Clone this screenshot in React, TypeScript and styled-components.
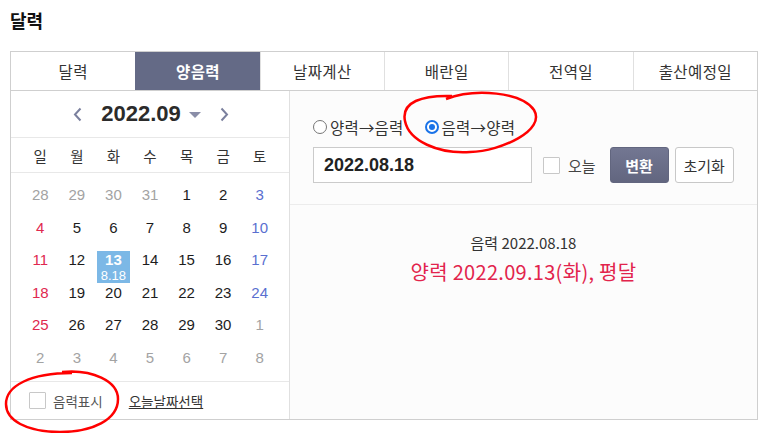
import * as React from 'react'
import styled, { createGlobalStyle } from 'styled-components'

const GlobalStyle = createGlobalStyle`
  body {
    margin: 0;
    background: #fff;
    font-family: 'Liberation Sans', 'Noto Sans CJK KR', sans-serif;
    color: #333;
  }
`

const Page = styled.div`
  position: relative;
  padding: 8px 15px 0 10px;
  width: 748px;
  height: 425px;
`
const Title = styled.h1`
  margin: 0 0 19px 0;
  font-size: 18px;
  line-height: 24px;
  font-weight: 700;
  color: #111;
  font-family: 'Noto Sans CJK KR', sans-serif;
`
const Box = styled.div`
  border: 1px solid #cfcfcf;
`
const Tabs = styled.div`
  display: grid;
  grid-template-columns: repeat(6, 1fr);
  border-bottom: 1px solid #cfcfcf;
`
const Tab = styled.div<{ $active?: boolean }>`
  height: 38px;
  display: flex;
  align-items: center;
  justify-content: center;
  font-family: 'Noto Sans CJK KR', sans-serif;
  font-size: 15.5px;
  letter-spacing: 0.4px;
  font-weight: ${p => (p.$active ? 700 : 400)};
  color: ${p => (p.$active ? '#fff' : '#333')};
  background: ${p => (p.$active ? '#646a86' : '#fff')};
  border-left: 1px solid ${p => (p.$active ? '#646a86' : '#e0e0e0')};
  &:first-child {
    border-left: none;
  }
`
const Body = styled.div`
  display: flex;
`
const CalendarPanel = styled.div`
  width: 278px;
  border-right: 1px solid #e0e0e0;
`
const MonthNav = styled.div`
  height: 46px;
  display: flex;
  align-items: center;
  justify-content: center;
  gap: 15px;
  padding-left: 2px;
  border-bottom: 1px solid #e8e8e8;
`
const NavArrow = styled.svg`
  width: 9px;
  height: 15px;
  margin: 0 4px;
`
const MonthLabel = styled.div`
  display: flex;
  align-items: center;
  gap: 8px;
  font-size: 22px;
  font-weight: 700;
  color: #2b2b2b;
`
const Caret = styled.span`
  width: 0;
  height: 0;
  border-left: 6px solid transparent;
  border-right: 6px solid transparent;
  border-top: 6px solid #8a8ea8;
  margin-top: 2px;
`
const WeekRow = styled.div`
  display: grid;
  grid-template-columns: repeat(7, 1fr);
  padding: 0 11px;
  height: 34px;
  align-items: center;
  border-bottom: 1px solid #e8e8e8;
  font-family: 'Noto Sans CJK KR', sans-serif;
  font-size: 14.5px;
  color: #333;
  text-align: center;
`
const DayGrid = styled.div`
  display: grid;
  grid-template-columns: repeat(7, 1fr);
  grid-auto-rows: 32.5px;
  padding: 6px 11px 7px;
  border-bottom: 1px solid #e8e8e8;
`
const dayColors = {
  out: '#a3a3a3',
  sun: '#e0284f',
  sat: '#5a6fd0',
  norm: '#1d1d1d'
}
type DayKind = keyof typeof dayColors
const DayCell = styled.div`
  display: flex;
  justify-content: center;
`
const DayBox = styled.div<{ $kind: DayKind; $selected?: boolean }>`
  width: 33px;
  height: 32px;
  margin-top: 7px;
  display: flex;
  flex-direction: column;
  align-items: center;
  font-size: 15px;
  line-height: 18px;
  color: ${p => (p.$selected ? '#fff' : dayColors[p.$kind])};
  font-weight: ${p => (p.$selected ? 700 : 400)};
  background: ${p => (p.$selected ? '#7cb8e6' : 'transparent')};
  position: relative;
  z-index: 1;
`
const Lunar = styled.span`
  font-size: 13px;
  line-height: 14px;
  font-weight: 400;
`
const CalFooter = styled.div`
  height: 37px;
  display: flex;
  align-items: center;
  padding-left: 18px;
  gap: 26px;
  font-family: 'Noto Sans CJK KR', sans-serif;
  font-size: 13.5px;
`
const CheckLabel = styled.label`
  display: flex;
  align-items: center;
  gap: 7px;
  color: #555;
`
const CheckBox = styled.span`
  width: 15px;
  height: 15px;
  border: 1px solid #c8c8c8;
  border-radius: 1px;
  background: #fff;
`
const TodayLink = styled.a`
  color: #333;
  text-decoration: underline;
`
const ConvertPanel = styled.div`
  flex: 1;
  background: #fcfcfc;
`
const ConvertForm = styled.div`
  padding: 26px 0 21px 23px;
  border-bottom: 1px solid #ececec;
`
const RadioRow = styled.div`
  display: flex;
  align-items: center;
  gap: 21px;
  height: 20px;
  margin-bottom: 10px;
  font-family: 'Noto Sans CJK KR', sans-serif;
  font-size: 15.5px;
  letter-spacing: 0.2px;
  color: #333;
`
const RadioLabel = styled.label`
  display: flex;
  align-items: center;
  gap: 3px;
`
const RadioDot = styled.span<{ $checked?: boolean }>`
  box-sizing: border-box;
  width: 14px;
  height: 14px;
  border-radius: 50%;
  border: ${p => (p.$checked ? '2px solid #1a73e8' : '1px solid #767676')};
  background: #fff;
  display: flex;
  align-items: center;
  justify-content: center;
  &::after {
    content: '';
    display: ${p => (p.$checked ? 'block' : 'none')};
    width: 6px;
    height: 6px;
    border-radius: 50%;
    background: #1a73e8;
  }
`
const InputRow = styled.div`
  display: flex;
  align-items: center;
`
const DateInput = styled.div`
  box-sizing: border-box;
  width: 219px;
  height: 36px;
  border: 1px solid #cbcbcb;
  background: #fff;
  display: flex;
  align-items: center;
  padding-left: 10px;
  font-size: 18px;
  font-weight: 700;
  color: #222;
`
const TodayCheck = styled(CheckLabel)`
  margin: 0 14px 0 11px;
  gap: 8px;
  font-size: 15px;
  color: #444;
`
const Button = styled.button<{ $primary?: boolean }>`
  box-sizing: border-box;
  height: 36px;
  width: 59px;
  margin-right: 6px;
  border-radius: 3px;
  font-family: 'Noto Sans CJK KR', sans-serif;
  font-size: 15px;
  font-weight: ${p => (p.$primary ? 700 : 400)};
  color: ${p => (p.$primary ? '#fff' : '#333')};
  background: ${p => (p.$primary ? 'linear-gradient(#737792, #62667f)' : '#fff')};
  border: 1px solid ${p => (p.$primary ? '#62667f' : '#c8c8c8')};
  padding: 0;
`
const Result = styled.div`
  padding-top: 28px;
  text-align: center;
  font-family: 'Noto Sans CJK KR', sans-serif;
`
const ResultSource = styled.div`
  font-size: 15px;
  line-height: 20px;
  color: #333;
  margin-bottom: 6px;
`
const ResultTarget = styled.div`
  font-size: 20px;
  letter-spacing: 0.3px;
  line-height: 26px;
  color: #e2244c;
`
const Marks = styled.svg`
  position: absolute;
  left: 0;
  top: 0;
  width: 773px;
  height: 433px;
  pointer-events: none;
  z-index: 5;
`

type Day = { d: number; k: DayKind; lunar?: string }
const row = (nums: number[], kinds: DayKind[]): Day[] => nums.map((d, i) => ({ d, k: kinds[i] }))
const full: DayKind[] = ['sun', 'norm', 'norm', 'norm', 'norm', 'norm', 'sat']

const weeks: Day[][] = [
  row([28, 29, 30, 31, 1, 2, 3], ['out', 'out', 'out', 'out', 'norm', 'norm', 'sat']),
  row([4, 5, 6, 7, 8, 9, 10], full),
  row([11, 12, 13, 14, 15, 16, 17], full),
  row([18, 19, 20, 21, 22, 23, 24], full),
  row([25, 26, 27, 28, 29, 30, 1], ['sun', 'norm', 'norm', 'norm', 'norm', 'norm', 'out']),
  row([2, 3, 4, 5, 6, 7, 8], ['out', 'out', 'out', 'out', 'out', 'out', 'out'])
]
weeks[2][2].lunar = '8.18'

const tabs = ['달력', '양음력', '날짜계산', '배란일', '전역일', '출산예정일']
const weekdays = ['일', '월', '화', '수', '목', '금', '토']

const App = () => {
  return (
    <Page>
      <GlobalStyle />
      <Title>달력</Title>
      <Box>
        <Tabs>
          {tabs.map(t => (
            <Tab key={t} $active={t === '양음력'}>
              {t}
            </Tab>
          ))}
        </Tabs>
        <Body>
          <CalendarPanel>
            <MonthNav>
              <NavArrow viewBox='0 0 9 15'>
                <path d='M7.5 1.5 L2 7.5 L7.5 13.5' fill='none' stroke='#7b809e' strokeWidth='2' />
              </NavArrow>
              <MonthLabel>
                2022.09
                <Caret />
              </MonthLabel>
              <NavArrow viewBox='0 0 9 15'>
                <path d='M1.5 1.5 L7 7.5 L1.5 13.5' fill='none' stroke='#7b809e' strokeWidth='2' />
              </NavArrow>
            </MonthNav>
            <WeekRow>
              {weekdays.map(w => (
                <span key={w}>{w}</span>
              ))}
            </WeekRow>
            <DayGrid>
              {weeks.flat().map((day, i) => (
                <DayCell key={i}>
                  <DayBox $kind={day.k} $selected={!!day.lunar}>
                    {day.d}
                    {day.lunar ? <Lunar>{day.lunar}</Lunar> : null}
                  </DayBox>
                </DayCell>
              ))}
            </DayGrid>
            <CalFooter>
              <CheckLabel>
                <CheckBox />
                음력표시
              </CheckLabel>
              <TodayLink>오늘날짜선택</TodayLink>
            </CalFooter>
          </CalendarPanel>
          <ConvertPanel>
            <ConvertForm>
              <RadioRow>
                <RadioLabel>
                  <RadioDot />
                  양력→음력
                </RadioLabel>
                <RadioLabel>
                  <RadioDot $checked />
                  음력→양력
                </RadioLabel>
              </RadioRow>
              <InputRow>
                <DateInput>2022.08.18</DateInput>
                <TodayCheck>
                  <CheckBox />
                  오늘
                </TodayCheck>
                <Button $primary>변환</Button>
                <Button>초기화</Button>
              </InputRow>
            </ConvertForm>
            <Result>
              <ResultSource>음력 2022.08.18</ResultSource>
              <ResultTarget>양력 2022.09.13(화), 평달</ResultTarget>
            </Result>
          </ConvertPanel>
        </Body>
      </Box>
      <Marks viewBox='0 0 773 433'>
        <path
          d='M446 99 C475 88 522 92 534 110 C546 130 502 151 470 152 C438 154 409 141 405 121 C401 102 422 95 452 96'
          fill='none'
          stroke='#ff0000'
          strokeWidth='2.5'
        />
        <path
          d='M62 372 C92 369 118 381 118 399 C118 420 92 432 60 432 C26 432 6 420 6 404 C6 386 30 373 72 373'
          fill='none'
          stroke='#ff0000'
          strokeWidth='2.5'
        />
      </Marks>
    </Page>
  )
}

export default App
